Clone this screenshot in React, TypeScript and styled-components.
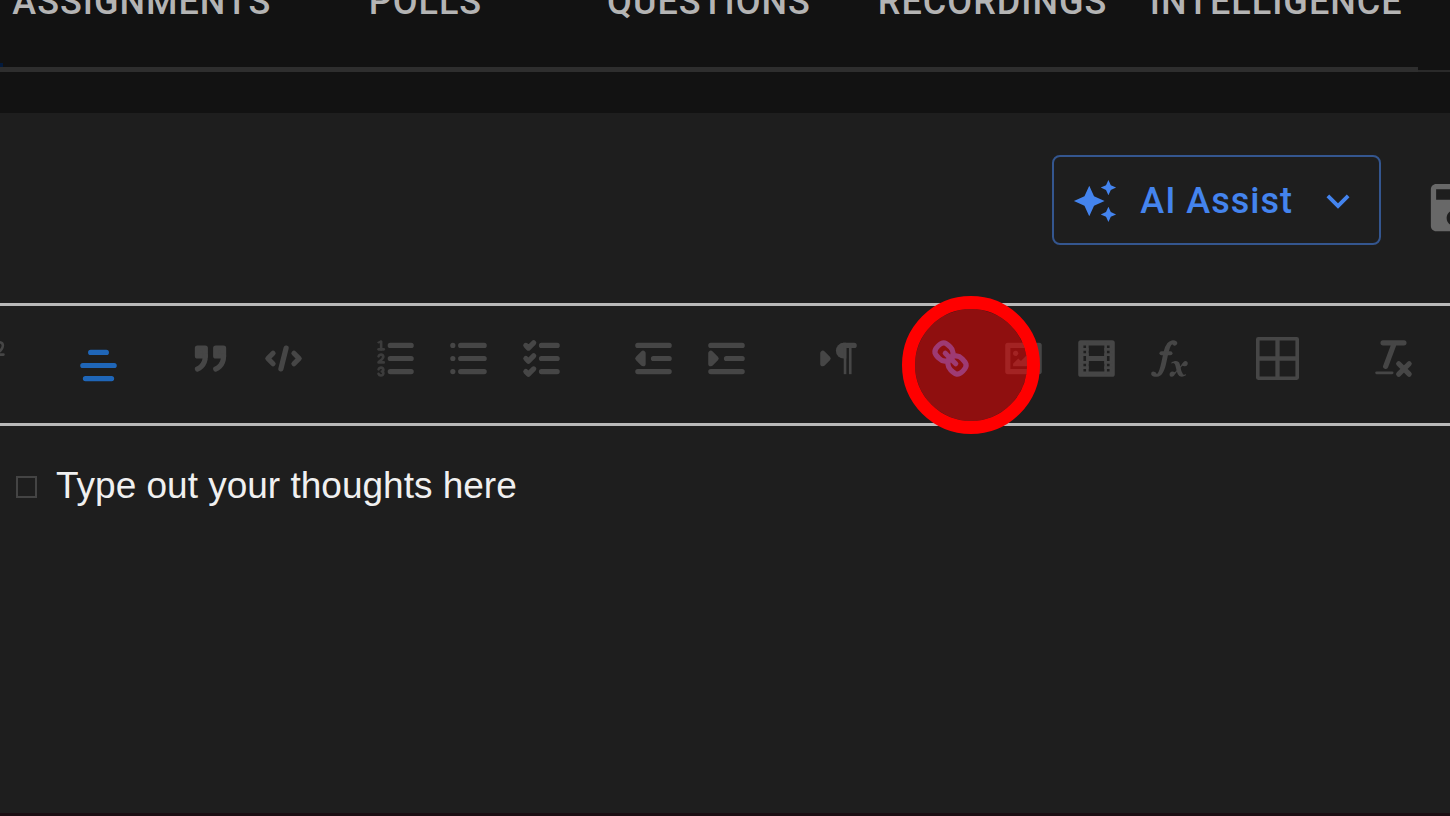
import React from 'react';
import styled, { createGlobalStyle, css } from 'styled-components';

const GlobalStyle = createGlobalStyle`
  *, *::before, *::after { box-sizing: border-box; }
  html { background: #121212; }
  body { margin: 0; background: #121212; }
  button { margin: 0; padding: 0; border: 0; background: none; color: inherit; cursor: pointer; }
`;

const Page = styled.div`
  display: flex;
  flex-direction: column;
  min-height: 100vh;
  overflow: hidden;
  background: #121212;
  font-family: Roboto, "Liberation Sans", sans-serif;
`;

const Header = styled.header`
  display: flex;
  align-items: flex-end;
  margin: -58px 0 41px;
`;

const Tabs = styled.nav`
  position: relative;
  flex: 1;
  display: grid;
  grid-template-columns: repeat(5, 1fr);
  border-bottom: 5px solid #2e2e2e;
`;

const Indicator = styled.span`
  position: absolute;
  left: 0;
  bottom: 0;
  width: 3px;
  height: 4px;
  background: #031a3c;
`;

const Tab = styled.button`
  height: 125px;
  && { padding-bottom: 5px; }
  && { color: #b4b4b4; }
  font: 500 36px/44px Roboto, "Liberation Sans", sans-serif;
  letter-spacing: 1px;
  text-transform: uppercase;
  white-space: nowrap;
`;

const HeaderEdge = styled.div`
  width: 32px;
  border-bottom: 2px solid #2a2a2a;
`;

const Panel = styled.main`
  flex: 1;
  display: flex;
  flex-direction: column;
  background: #1e1e1e;
  border-bottom: 3px solid #1b0d12;
`;

const Actions = styled.div`
  display: flex;
  justify-content: flex-end;
  align-items: flex-start;
  gap: 21px;
  padding: 42px 0 43px;
  margin-right: -57px;
`;

const AssistButton = styled.button`
  && {
    display: flex;
    align-items: center;
    gap: 22px;
    height: 90px;
    padding: 2px 18px 0;
    border: 2px solid #34568f;
    border-radius: 8px;
    color: #4484ee;
  }
  font: 500 36px/44px Roboto, "Liberation Sans", sans-serif;
  letter-spacing: 1px;
  white-space: nowrap;
`;

const SaveButton = styled.button`
  && {
    padding: 21px;
    color: #686868;
  }
  display: flex;
`;

const Toolbar = styled.div`
  height: 123px;
  padding: 21px 0;
  border: solid #b9b9b9;
  border-width: 3px 0;
`;

const ToolbarTrack = styled.div`
  display: flex;
  gap: 39px;
  margin-left: -50px;
`;

const Group = styled.div`
  position: relative;
  display: flex;
`;

const Tool = styled.button<{ $tone?: string; $picker?: boolean }>`
  display: flex;
  align-items: center;
  justify-content: center;
  width: 73px;
  height: ${(p) => (p.$picker ? 77 : 63)}px;
  && { color: ${(p) => p.$tone || '#464646'}; }
`;

const TableTool = styled(Tool)`
  && {
    justify-content: flex-start;
    padding-left: 11px;
  }
`;

const ClickMarker = styled.span`
  position: absolute;
  z-index: 1;
  left: -12px;
  top: -31px;
  width: 138px;
  height: 138px;
  border: 13px solid #f00;
  border-radius: 50%;
  background: rgba(255, 0, 0, 0.5);
  background-clip: padding-box;
  pointer-events: none;
`;

const Glyph = styled.svg<{ $size: number }>`
  display: block;
  flex: none;
  width: ${(p) => p.$size}px;
  height: ${(p) => p.$size}px;
  ${(p) => p.viewBox === '0 0 18 18' ? css`
    fill: none;
    stroke: currentColor;
    stroke-width: 2;
    stroke-linecap: round;
    stroke-linejoin: round;
    .fill { fill: currentColor; stroke: none; }
    .both { fill: currentColor; }
    .thin { stroke-width: 1; }
    .digits { opacity: 0.75; }
  ` : css`fill: currentColor;`}
`;

const Editor = styled.section`
  flex: 1;
  padding: 35px 16px;
`;

const TaskLine = styled.label`
  display: flex;
  align-items: center;
  gap: 19px;
  color: #f0f0f0;
  font: 400 37px/50px "Liberation Sans", Arial, sans-serif;
`;

const TaskBox = styled.input`
  appearance: none;
  width: 21px;
  height: 22px;
  margin: 2px 0 0;
  border: 2px solid #444;
`;

const icons: Record<string, React.ReactNode> = {
  super: (
    <path className="fill" d="M15.5,7H13.861a4.015,4.015,0,0,0,1.914-2.975,1.8,1.8,0,0,0-1.6-1.751A1.922,1.922,0,0,0,12.021,3.7a0.5,0.5,0,1,0,.957.291,0.917,0.917,0,0,1,1.053-.725,0.81,0.81,0,0,1,.744.762c0,1.077-1.164,1.925-1.934,2.486A1.423,1.423,0,0,0,12,7.5a0.5,0.5,0,0,0,.5.5h3A0.5,0.5,0,0,0,15.5,7Z" />
  ),
  align: <path d="M3 9H15M4 14H14M6 4H12" />,
  quote: (
    <>
      <rect className="both" x="4" y="5" width="3" height="3" />
      <rect className="both" x="11" y="5" width="3" height="3" />
      <path className="both" d="M7,8c0,4.031-3,5-3,5" />
      <path className="both" d="M14,8c0,4.031-3,5-3,5" />
    </>
  ),
  code: <path d="M5 7L3 9L5 11M13 7L15 9L13 11M10 5L8 13" />,
  ordered: (
    <>
      <path d="M7 4H15M7 9H15M7 14H15" />
      <g className="digits">
        <path className="thin" d="M2.5 5.5H4.5" />
        <path className="fill" d="M3.5,6A0.5,0.5,0,0,1,3,5.5V3.085l-0.276.138A0.5,0.5,0,0,1,2.053,3c-0.124-.247-0.023-0.324.224-0.447l1-.5A0.5,0.5,0,0,1,4,2.5v3A0.5,0.5,0,0,1,3.5,6Z" />
        <path className="thin" d="M4.5,10.5h-2c0-.234,1.85-1.076,1.85-2.234A0.959,0.959,0,0,0,2.5,8.156" />
        <path className="thin" d="M2.5,14.846a0.959,0.959,0,0,0,1.85-.109A0.7,0.7,0,0,0,3.75,14a0.688,0.688,0,0,0,.6-0.736,0.959,0.959,0,0,0-1.85-.109" />
      </g>
    </>
  ),
  bullet: <path d="M6 4H15M6 9H15M6 14H15M3 4H3M3 9H3M3 14H3" />,
  check: <path d="M9 4H15M9 9H15M9 14H15M3 4L4 5L6 3M3 9L4 10L6 8M3 14L4 15L6 13" />,
  outdent: (
    <>
      <path d="M3 4H15M9 9H15M3 14H15" />
      <path className="both" d="M5 7V11L3 9Z" />
    </>
  ),
  indent: (
    <>
      <path d="M3 4H15M9 9H15M3 14H15" />
      <path className="both" d="M3 7V11L5 9Z" />
    </>
  ),
  direction: (
    <>
      <path className="both" d="M3 11L5 9L3 7Z" />
      <path d="M15 4H11" />
      <path className="fill" d="M11,3a3,3,0,0,0,0,6h1V3H11Z" />
      <rect className="fill" x="11" y="4" width="1" height="11" />
      <rect className="fill" x="13" y="4" width="1" height="11" />
    </>
  ),
  link: (
    <>
      <path d="M7 7L11 11" />
      <path d="M8.9,4.577a3.476,3.476,0,0,1,.36,4.679A3.476,3.476,0,0,1,4.577,8.9C3.185,7.5,2.035,6.4,4.217,4.217S7.5,3.185,8.9,4.577Z" />
      <path d="M13.423,9.1a3.476,3.476,0,0,0-4.679-.36,3.476,3.476,0,0,0,.36,4.679c1.392,1.392,2.5,2.542,4.679.36S14.815,10.5,13.423,9.1Z" />
    </>
  ),
  image: (
    <>
      <rect x="3" y="4" width="12" height="10" />
      <circle className="fill" cx="6" cy="7" r="1" />
      <path className="fill" d="M5 12V11L7 9L8 10L11 7L13 9V12Z" />
    </>
  ),
  video: (
    <>
      <rect x="3" y="3" width="12" height="12" />
      <path className="fill" d="M5 3h1v12h-1zM12 3h1v12h-1zM5 8h8v2h-8z" />
      <path className="fill" d="M3 5h3v1h-3zM3 7h3v1h-3zM3 10h3v1h-3zM3 12h3v1h-3z" />
      <path className="fill" d="M12 5h3v1h-3zM12 7h3v1h-3zM12 10h3v1h-3zM12 12h3v1h-3z" />
    </>
  ),
  formula: (
    <>
      <path className="fill" d="M11.759,2.482a2.561,2.561,0,0,0-3.53.607A7.656,7.656,0,0,0,6.8,6.2C6.109,9.188,5.275,14.677,4.15,14.927a1.545,1.545,0,0,0-1.3-.933A0.922,0.922,0,0,0,2,15.036S1.954,16,4.119,16s3.091-2.691,3.7-5.553c0.177-.826.36-1.726,0.554-2.6L8.775,6.2c0.381-1.421.807-2.521,1.306-2.676a1.014,1.014,0,0,0,1.02.56A0.966,0.966,0,0,0,11.759,2.482Z" />
      <rect className="fill" x="5.15" y="6.2" width="5" height="1.6" rx="0.8" />
      <path className="fill" d="M13.663,12.027a1.662,1.662,0,0,1,.266-0.276q0.193,0.069.456,0.138a2.1,2.1,0,0,0,.535.069,1.075,1.075,0,0,0,.767-0.3,1.044,1.044,0,0,0,.314-0.8,0.84,0.84,0,0,0-.238-0.619,0.8,0.8,0,0,0-.594-0.239,1.154,1.154,0,0,0-.781.3,4.607,4.607,0,0,0-.781,1q-0.091.15-.218,0.346l-0.246.38c-0.068-.288-0.137-0.582-0.212-0.885-0.459-1.847-2.494-.984-2.941-0.8-0.482.2-.353,0.647-0.094,0.529a0.869,0.869,0,0,1,1.281.585c0.217,0.751.377,1.436,0.527,2.038a5.688,5.688,0,0,1-.362.467,2.69,2.69,0,0,1-.264.271q-0.221-.08-0.471-0.147a2.029,2.029,0,0,0-.522-0.066,1.079,1.079,0,0,0-.768.3A1.058,1.058,0,0,0,9,15.131a0.82,0.82,0,0,0,.832.852,1.134,1.134,0,0,0,.787-0.3,5.11,5.11,0,0,0,.776-0.993q0.141-.219.215-0.34c0.046-.076.122-0.194,0.223-0.346a2.786,2.786,0,0,0,.918,1.726,2.582,2.582,0,0,0,2.376-.185c0.317-.181.212-0.565,0-0.494A0.807,0.807,0,0,1,14.176,15a5.159,5.159,0,0,1-.913-2.446l0,0Q13.487,12.24,13.663,12.027Z" />
    </>
  ),
  clean: (
    <>
      <path d="M5 3H13M6 12L9.35 3M11 11L15 15M15 11L11 15" />
      <rect className="fill" x="2" y="14" width="7" height="1" rx="0.5" />
    </>
  ),
};

type ToolSpec = { icon: string; label: string; tone?: string; picker?: boolean };

const leadingGroups: ToolSpec[][] = [
  [{ icon: 'super', label: 'Superscript' }],
  [{ icon: 'align', label: 'Text alignment', tone: '#1f66b8', picker: true }],
  [
    { icon: 'quote', label: 'Block quote' },
    { icon: 'code', label: 'Code block' },
  ],
  [
    { icon: 'ordered', label: 'Numbered list' },
    { icon: 'bullet', label: 'Bulleted list' },
    { icon: 'check', label: 'Checklist' },
  ],
  [
    { icon: 'outdent', label: 'Decrease indent' },
    { icon: 'indent', label: 'Increase indent' },
  ],
  [{ icon: 'direction', label: 'Text direction' }],
];

const mediaGroup: ToolSpec[] = [
  { icon: 'link', label: 'Link', tone: '#3d74e6' },
  { icon: 'image', label: 'Image' },
  { icon: 'video', label: 'Video' },
  { icon: 'formula', label: 'Formula' },
];

const tabs = ['Assignments', 'Polls', 'Questions', 'Recordings', 'Intelligence'];

function ToolButton({ icon, label, tone, picker }: ToolSpec) {
  return (
    <Tool type="button" aria-label={label} $tone={tone} $picker={picker}>
      <Glyph viewBox="0 0 18 18" $size={47}>{icons[icon]}</Glyph>
    </Tool>
  );
}

export default function App() {
  return (
    <>
      <GlobalStyle />
      <Page>
        <Header>
          <Tabs>
            {tabs.map((tab) => (
              <Tab key={tab} type="button">{tab}</Tab>
            ))}
            <Indicator />
          </Tabs>
          <HeaderEdge />
        </Header>
        <Panel>
          <Actions>
            <AssistButton type="button">
              <Glyph viewBox="0 0 24 24" $size={46}>
                <path d="M19 9l1.25-2.75L23 5l-2.75-1.25L19 1l-1.25 2.75L15 5l2.75 1.25L19 9zm-7.5.5L9 4 6.5 9.5 1 12l5.5 2.5L9 20l2.5-5.5L17 12l-5.5-2.5zM19 15l-1.25 2.75L15 19l2.75 1.25L19 23l1.25-2.75L23 19l-2.75-1.25L19 15z" />
              </Glyph>
              AI Assist
              <Glyph viewBox="0 0 24 24" $size={46}>
                <path d="M16.59 8.59L12 13.17 7.41 8.59 6 10l6 6 6-6z" />
              </Glyph>
            </AssistButton>
            <SaveButton type="button" aria-label="Save">
              <Glyph viewBox="0 0 24 24" $size={63}>
                <path d="M17 3H5c-1.11 0-2 .9-2 2v14c0 1.1.89 2 2 2h14c1.1 0 2-.9 2-2V7l-4-4zm-5 16c-1.66 0-3-1.34-3-3s1.34-3 3-3 3 1.34 3 3-1.34 3-3 3zm3-10H5V5h10v4z" />
              </Glyph>
            </SaveButton>
          </Actions>
          <Toolbar role="toolbar" aria-label="Formatting">
            <ToolbarTrack>
              {leadingGroups.map((group) => (
                <Group key={group[0].icon}>
                  {group.map((tool) => <ToolButton key={tool.icon} {...tool} />)}
                </Group>
              ))}
              <Group>
                {mediaGroup.map((tool) => <ToolButton key={tool.icon} {...tool} />)}
                <ClickMarker />
              </Group>
              <Group>
                <TableTool type="button" aria-label="Table">
                  <Glyph viewBox="0 0 24 24" $size={43}>
                    <path fillRule="evenodd" d="M1.2 0H22.8Q24 0 24 1.2V22.8Q24 24 22.8 24H1.2Q0 24 0 22.8V1.2Q0 0 1.2 0ZM2 2V10.8H10.8V2ZM13.2 2V10.8H22V2ZM2 13.2V22H10.8V13.2ZM13.2 13.2V22H22V13.2Z" />
                  </Glyph>
                </TableTool>
              </Group>
              <Group>
                <ToolButton icon="clean" label="Clear formatting" />
              </Group>
            </ToolbarTrack>
          </Toolbar>
          <Editor>
            <TaskLine>
              <TaskBox type="checkbox" />
              Type out your thoughts here
            </TaskLine>
          </Editor>
        </Panel>
      </Page>
    </>
  );
}
